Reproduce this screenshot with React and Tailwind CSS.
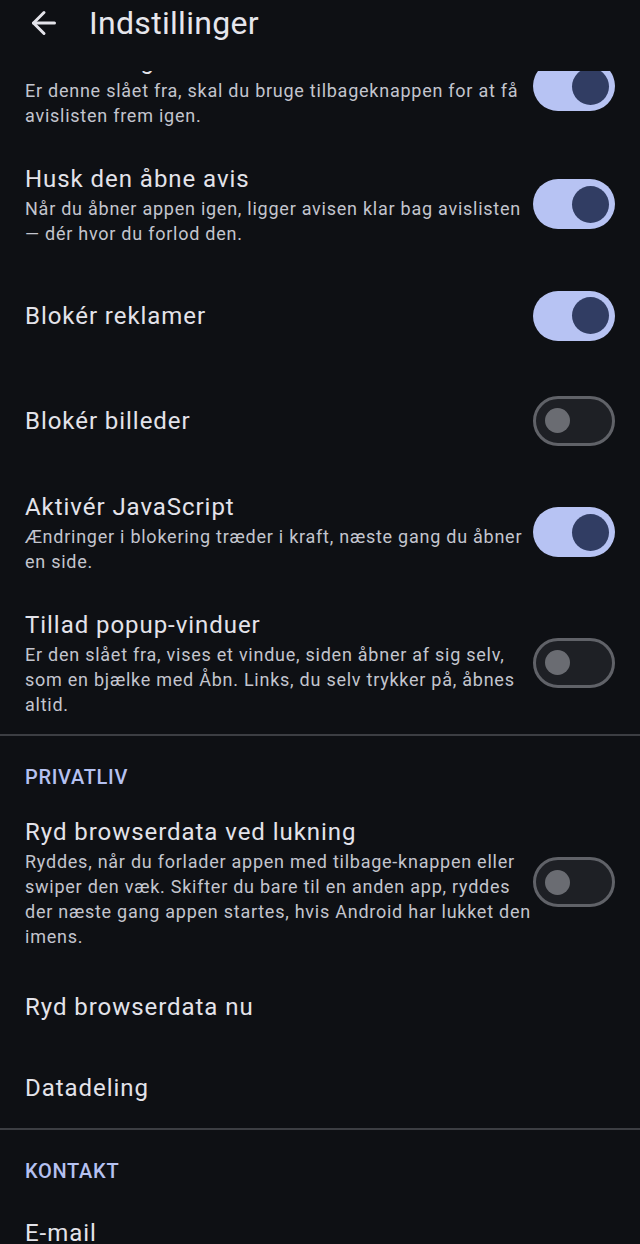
import { ArrowLeft } from "lucide-react";

const font = "font-['Roboto','Noto_Sans',sans-serif]";

function Toggle({ on }) {
  if (on) {
    return (
      <div className="w-[82px] h-[50px] rounded-full bg-[#b7c3f3] flex items-center justify-end pr-[6px]">
        <div className="w-[37px] h-[37px] rounded-full bg-[#313d63]" />
      </div>
    );
  }
  return (
    <div className="w-[82px] h-[50px] rounded-full bg-[#1e2025] border-[3px] border-[#606268] flex items-center pl-[9px]">
      <div className="w-[25px] h-[25px] rounded-full bg-[#6a6c72]" />
    </div>
  );
}

function SwitchRow({ title, desc, on }) {
  return (
    <div className="flex items-center min-h-[105px] py-[17px] pl-[25px] pr-[25px]">
      <div className="flex-1 min-w-0">
        <p className="text-[24px] leading-[34px] tracking-[0.95px] text-[#e3e3ea]">{title}</p>
        {desc && (
          <p className="text-[18px] leading-[25px] tracking-[0.75px] text-[#c3c5ce]">{desc}</p>
        )}
      </div>
      <Toggle on={on} />
    </div>
  );
}

function LinkRow({ title }) {
  return (
    <div className="flex items-center h-[81px] px-[25px]">
      <p className="text-[24px] leading-[34px] tracking-[0.95px] text-[#e3e3ea]">{title}</p>
    </div>
  );
}

function Category({ label }) {
  return (
    <div className="pt-[29px] pb-[9px] px-[25px]">
      <p className="text-[20px] leading-[24px] font-medium tracking-[0.7px] text-[#b5c1f1]">{label}</p>
    </div>
  );
}

function Divider() {
  return <div className="h-[2px] bg-[#3c3e43]" />;
}

export default function App() {
  return (
    <div className={`${font} w-[640px] h-[1244px] bg-[#0e1014] flex flex-col overflow-hidden`}>
      <header className="relative z-10 h-[71px] shrink-0 bg-[#0e1014]">
        <div className="flex items-center h-[46px] pl-[26px]">
          <ArrowLeft size={36} strokeWidth={2} className="text-[#e3e3ea]" />
          <h1 className="ml-[27px] text-[32px] leading-[40px] tracking-[0.3px] text-[#e6e6ec]">
            Indstillinger
          </h1>
        </div>
      </header>

      <div className="flex-1 overflow-hidden">
        <div className="-mt-[44px]">
          <SwitchRow
            title="Luk avis og vis avislisten"
            desc="Er denne slået fra, skal du bruge tilbageknappen for at få avislisten frem igen."
            on
          />
          <SwitchRow
            title="Husk den åbne avis"
            desc="Når du åbner appen igen, ligger avisen klar bag avislisten — dér hvor du forlod den."
            on
          />
          <SwitchRow title="Blokér reklamer" on />
          <SwitchRow title="Blokér billeder" on={false} />
          <SwitchRow
            title="Aktivér JavaScript"
            desc="Ændringer i blokering træder i kraft, næste gang du åbner en side."
            on
          />
          <SwitchRow
            title="Tillad popup-vinduer"
            desc="Er den slået fra, vises et vindue, siden åbner af sig selv, som en bjælke med Åbn. Links, du selv trykker på, åbnes altid."
            on={false}
          />
          <Divider />
          <Category label="PRIVATLIV" />
          <SwitchRow
            title="Ryd browserdata ved lukning"
            desc="Ryddes, når du forlader appen med tilbage-knappen eller swiper den væk. Skifter du bare til en anden app, ryddes der næste gang appen startes, hvis Android har lukket den imens."
            on={false}
          />
          <LinkRow title="Ryd browserdata nu" />
          <LinkRow title="Datadeling" />
          <Divider />
          <Category label="KONTAKT" />
          <LinkRow title="E-mail" />
        </div>
      </div>
    </div>
  );
}
